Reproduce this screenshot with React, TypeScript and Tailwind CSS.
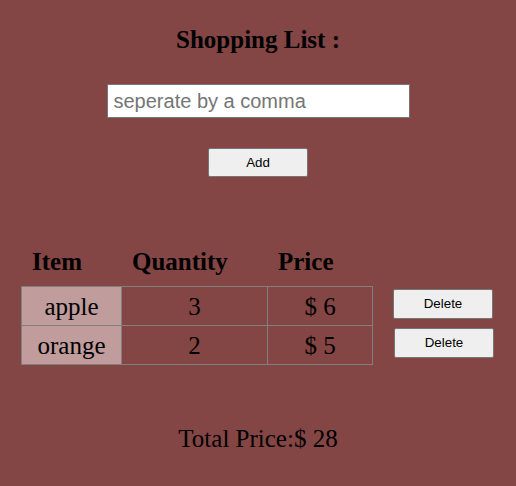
import React from "react";

const rows = [
  { item: "apple", qty: 3, price: 6 },
  { item: "orange", qty: 2, price: 5 },
];

export default function App() {
  return (
    <div className="w-[516px] h-[486px] bg-[#844545] font-['Liberation_Serif',serif] text-black overflow-hidden">
      <div className="pt-[25px] text-center text-[25px] font-bold leading-[29px]">Shopping List :</div>
      <div className="mt-[30px] flex justify-center">
        <input
          className="w-[303px] h-[34px] bg-white border border-[#767676] px-[6px] text-[20px] font-['Liberation_Sans',sans-serif] placeholder:text-[#757575] outline-none"
          placeholder="seperate by a comma"
        />
      </div>
      <div className="mt-[30px] flex justify-center">
        <button className="w-[100px] h-[29px] bg-[#efefef] border border-[#767676] rounded-[2px] text-[13.33px] font-['Liberation_Sans',sans-serif]">
          Add
        </button>
      </div>
      <div className="mt-[70px] pl-[32px] flex text-[25px] font-bold leading-[29px]">
        <span className="w-[100px]">Item</span>
        <span className="w-[146px]">Quantity</span>
        <span>Price</span>
      </div>
      <div className="mt-[10px] pl-[21px] flex items-start">
        <div className="grid grid-cols-[99px_146px_105px] border border-[#808080] text-[25px] leading-[29px]">
          {rows.map((r, i) => (
            <React.Fragment key={r.item}>
              <div className={`flex items-center justify-center bg-[#c09c9c] ${i > 0 ? "h-[39px] border-t border-[#808080]" : "h-[38px]"}`}>
                {r.item}
              </div>
              <div className={`flex items-center justify-center border-l border-[#808080] ${i > 0 ? "h-[39px] border-t" : "h-[38px]"}`}>
                {r.qty}
              </div>
              <div className={`flex items-center justify-center border-l border-[#808080] ${i > 0 ? "h-[39px] border-t" : "h-[38px]"}`}>
                $ {r.price}
              </div>
            </React.Fragment>
          ))}
        </div>
        <div className="ml-[20px] pt-[3px] flex flex-col gap-[9px]">
          {rows.map((r, i) => (
            <button
              key={r.item}
              className={`w-[100px] h-[30px] bg-[#efefef] border border-[#767676] rounded-[2px] text-[13.33px] font-['Liberation_Sans',sans-serif] ${i > 0 ? "ml-[1px]" : ""}`}
            >
              Delete
            </button>
          ))}
        </div>
      </div>
      <div className="mt-[59px] text-center text-[25px] leading-[29px]">Total Price:$ 28</div>
    </div>
  );
}
